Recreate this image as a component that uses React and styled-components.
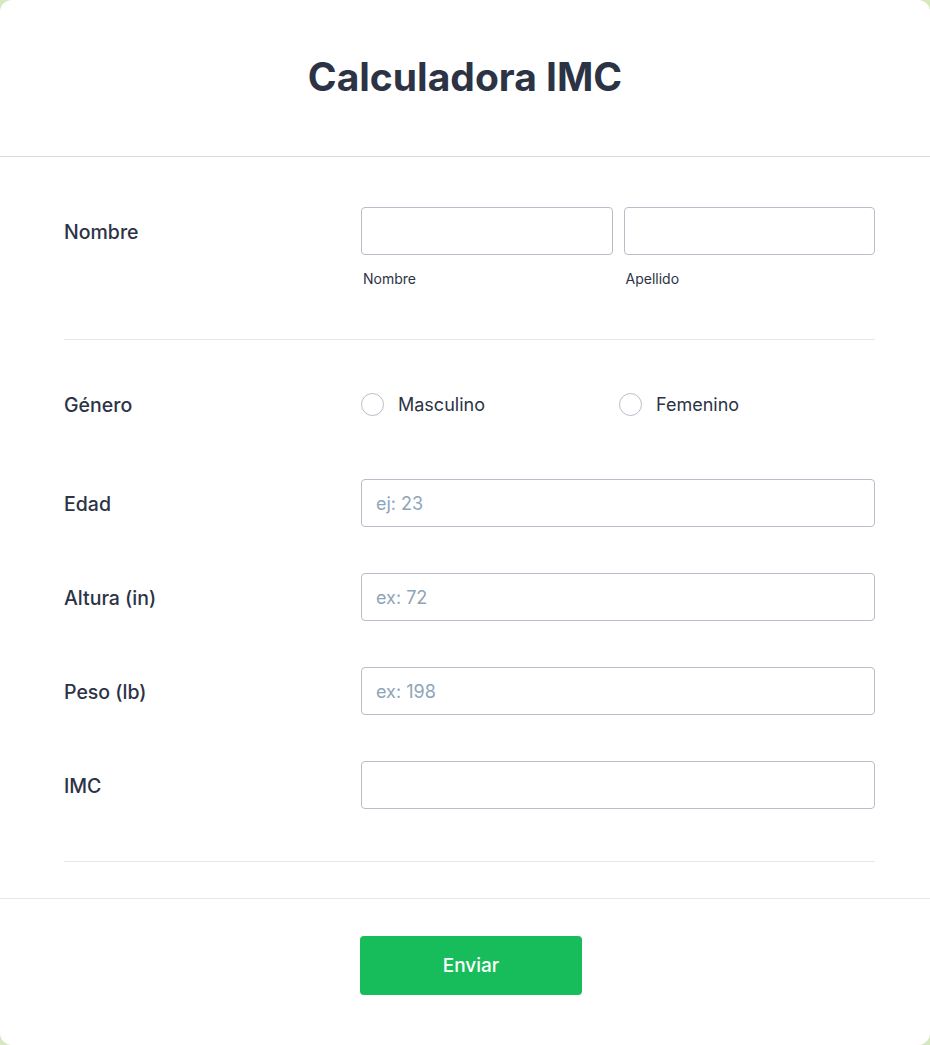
import styled, { createGlobalStyle } from "styled-components";

const GlobalStyle = createGlobalStyle`
  html, body {
    margin: 0;
    padding: 0;
    background-color: #d6e8bd;
    font-family: Inter, "Noto Sans", sans-serif;
  }
  * {
    box-sizing: border-box;
  }
`;

const Card = styled.div`
  width: 930px;
  min-height: 1045px;
  background-color: #fff;
  border-radius: 12px;
  display: flex;
  flex-direction: column;
  color: #2c3345;
`;

const Header = styled.div`
  height: 157px;
  display: flex;
  align-items: center;
  justify-content: center;
  border-bottom: 1px solid #d9d9e6;
`;

const Title = styled.h1`
  margin: 0;
  font-size: 39px;
  font-weight: 700;
  color: #2c3345;
  padding-bottom: 3px;
`;

const Form = styled.div`
  padding: 50px 55px 0 64px;
  display: flex;
  flex-direction: column;
`;

const Row = styled.div`
  display: grid;
  grid-template-columns: 297px 1fr;
  align-items: start;
  margin-bottom: ${(props) => props.gap || 46}px;
`;

const Label = styled.label`
  height: 48px;
  display: flex;
  align-items: center;
  padding-top: 2px;
  font-size: 19.5px;
  font-weight: 500;
  color: #2c3345;
`;

const NameFields = styled.div`
  display: grid;
  grid-template-columns: 1fr 1fr;
  column-gap: 11px;
`;

const Field = styled.div`
  display: flex;
  flex-direction: column;
`;

const Input = styled.input`
  width: 100%;
  height: 48px;
  border: 1px solid #b8bdc9;
  border-radius: 4px;
  padding: 0 14px;
  font-family: Inter, "Noto Sans", sans-serif;
  font-size: 18px;
  color: #2c3345;
  background: #fff;
  outline: none;

  &::placeholder {
    color: #8ea5b8;
  }
`;

const SubLabel = styled.span`
  margin-top: 14px;
  margin-left: 2px;
  font-size: 14px;
  line-height: 20px;
  color: #2c3345;
`;

const Divider = styled.hr`
  margin: 0;
  border: none;
  border-top: 1px solid #e6e6ec;
  margin-bottom: ${(props) => props.gap || 0}px;
`;

const RadioGroup = styled.div`
  display: grid;
  grid-template-columns: 258px 1fr;
  height: 48px;
  align-items: center;
`;

const RadioOption = styled.label`
  display: flex;
  align-items: center;
  gap: 14px;
  font-size: 18px;
  color: #2c3345;
`;

const RadioCircle = styled.span`
  width: 23px;
  height: 23px;
  border-radius: 50%;
  border: 1px solid #b8bdc9;
  background: #fff;
`;

const Footer = styled.div`
  margin-top: 36px;
  border-top: 1px solid #e6e6ec;
  padding-top: 37px;
  display: flex;
  justify-content: center;
`;

const Button = styled.button`
  width: 222px;
  height: 59px;
  margin-left: 12px;
  border: none;
  border-radius: 4px;
  background-color: #18bd5b;
  color: #fff;
  font-family: Inter, "Noto Sans", sans-serif;
  font-size: 19px;
  font-weight: 500;
  cursor: pointer;
`;

const App = () => {
  return (
    <>
      <GlobalStyle />
      <Card>
        <Header>
          <Title>Calculadora IMC</Title>
        </Header>
        <Form>
          <Row gap={50}>
            <Label>Nombre</Label>
            <NameFields>
              <Field>
                <Input type="text" />
                <SubLabel>Nombre</SubLabel>
              </Field>
              <Field>
                <Input type="text" />
                <SubLabel>Apellido</SubLabel>
              </Field>
            </NameFields>
          </Row>
          <Divider gap={40} />
          <Row gap={51}>
            <Label>Género</Label>
            <RadioGroup>
              <RadioOption>
                <RadioCircle />
                Masculino
              </RadioOption>
              <RadioOption>
                <RadioCircle />
                Femenino
              </RadioOption>
            </RadioGroup>
          </Row>
          <Row>
            <Label>Edad</Label>
            <Input type="text" placeholder="ej: 23" />
          </Row>
          <Row>
            <Label>Altura (in)</Label>
            <Input type="text" placeholder="ex: 72" />
          </Row>
          <Row>
            <Label>Peso (lb)</Label>
            <Input type="text" placeholder="ex: 198" />
          </Row>
          <Row gap={52}>
            <Label>IMC</Label>
            <Input type="text" />
          </Row>
          <Divider />
        </Form>
        <Footer>
          <Button>Enviar</Button>
        </Footer>
      </Card>
    </>
  );
};

export default App;
